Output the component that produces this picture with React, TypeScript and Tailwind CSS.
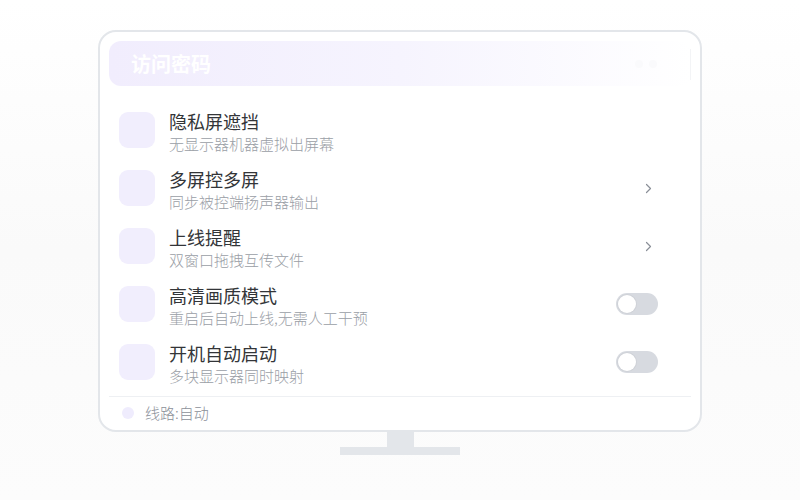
import React from "react";

type Row = {
  title: string;
  sub: string;
  right?: "chevron" | "toggle";
};

const rows: Row[] = [
  { title: "隐私屏遮挡", sub: "无显示器机器虚拟出屏幕" },
  { title: "多屏控多屏", sub: "同步被控端扬声器输出", right: "chevron" },
  { title: "上线提醒", sub: "双窗口拖拽互传文件", right: "chevron" },
  { title: "高清画质模式", sub: "重启后自动上线,无需人工干预", right: "toggle" },
  { title: "开机自动启动", sub: "多块显示器同时映射", right: "toggle" },
];

function Chevron() {
  return (
    <svg width="7" height="11" viewBox="0 0 7 11" className="mr-[6px]" aria-hidden="true">
      <polyline points="1.5,1.5 5.5,5.5 1.5,9.5" fill="none" stroke="#8a8f98" strokeWidth="1.2" strokeLinecap="round" strokeLinejoin="round" />
    </svg>
  );
}

function Toggle() {
  return (
    <div className="w-[42px] h-[22px] rounded-full bg-[#d7dae0] p-[2px] flex items-center">
      <div className="w-[18px] h-[18px] rounded-full bg-white shadow-[0_0_0_1px_rgba(0,0,0,0.04)]" />
    </div>
  );
}

export default function App() {
  return (
    <div
      className="w-[800px] h-[500px] bg-gradient-to-b from-white via-[#fafafa] to-[#fcfcfc] flex flex-col items-center pt-[30px]"
      style={{ fontFamily: '"Noto Sans CJK SC", "Noto Sans", sans-serif' }}
    >
      {/* Screen */}
      <div className="w-[604px] h-[402px] bg-white border-2 border-[#e3e6ea] rounded-[18px] px-[9px] pt-[9px] flex flex-col">
        {/* Header */}
        <div className="h-[45px] rounded-xl bg-gradient-to-r from-[#f1edfd] via-[#f6f4fe] to-white flex items-center px-[22px] relative">
          <span className="text-white text-[20px] font-bold leading-none">访问密码</span>
          <div className="ml-auto flex items-center gap-[6px] mr-[12px]">
            <span className="w-[8px] h-[8px] rounded-full bg-[#fafafc]" />
            <span className="w-[8px] h-[8px] rounded-full bg-[#fafafc]" />
          </div>
          <div className="absolute right-0 top-[8px] bottom-[6px] w-px bg-[#f3f4f6]" />
        </div>

        {/* Rows */}
        <div className="mt-[15px] flex flex-col">
          {rows.map((r) => (
            <div key={r.title} className="h-[58px] flex items-center pl-[10px] pr-[33px]">
              <div className="w-[36px] h-[36px] rounded-[9px] bg-[#f1eefd] shrink-0" />
              <div className="ml-[14px] flex flex-col mt-[4px]">
                <span className="text-[18px] leading-[22px] text-[#333538]">{r.title}</span>
                <span className="text-[15px] font-light leading-[20px] mt-[2px] text-[#9a9ea6]">{r.sub}</span>
              </div>
              <div className="ml-auto flex items-center">
                {r.right === "chevron" && <Chevron />}
                {r.right === "toggle" && <Toggle />}
              </div>
            </div>
          ))}
        </div>

        {/* Footer */}
        <div className="mt-[5px] border-t border-[#eef0f3] h-[33px] flex items-center pl-[13px]">
          <span className="w-[12px] h-[12px] rounded-full bg-[#efecfd]" />
          <span className="ml-[11px] text-[15px] font-light text-[#8b9099]">线路:自动</span>
        </div>
      </div>

      {/* Stand */}
      <div className="w-[27px] h-[15px] bg-[#e3e6ea]" />
      <div className="w-[120px] h-[8px] bg-[#e3e6ea]" />
    </div>
  );
}
